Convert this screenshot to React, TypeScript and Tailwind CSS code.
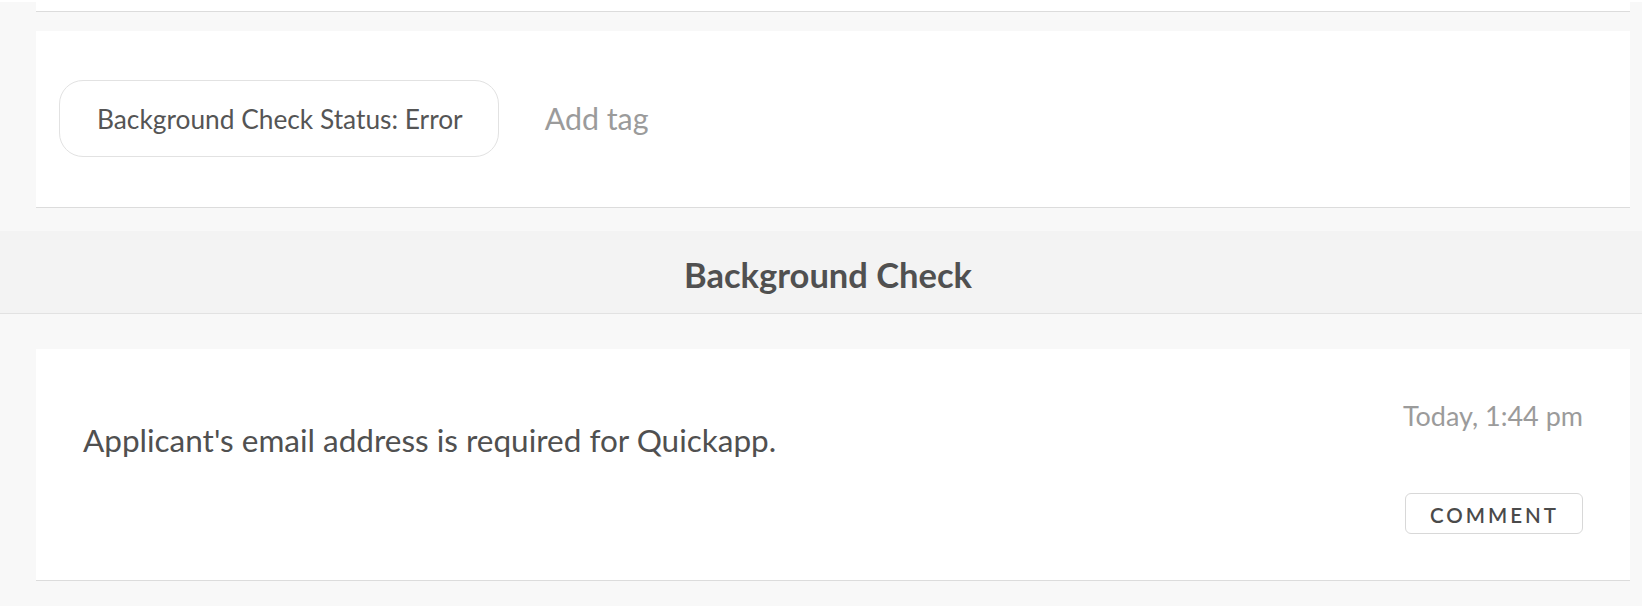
import React from "react";

const font = { fontFamily: '"Lato", "Noto Sans", sans-serif' };

export default function App() {
  return (
    <div className="w-[1642px] h-[606px] bg-[#f8f8f8] overflow-hidden" style={font}>
      <div className="h-[2px] bg-white" />
      <div className="ml-[36px] mr-[12px] h-[10px] bg-white border-b border-[#dcdcdc]" />
      <div className="ml-[36px] mr-[12px] mt-[19px] bg-white border-b border-[#dcdcdc] pt-[49px] pb-[50px] pl-[23px] flex items-start">
        <div className="h-[77px] rounded-[24px] border border-[#e2e2e2] bg-white pl-[37px] pr-[35px] pt-[3px] flex items-center text-[26.3px] leading-[1.2] text-[#555555]">
          Background Check Status: Error
        </div>
        <div className="ml-[46px] mt-[20px] text-[30.4px] leading-[1.2] text-[#9b9b9b]">Add tag</div>
      </div>
      <div className="mt-[23px] h-[83px] bg-[#f3f3f3] border-b border-[#e2e2e2] pt-[23px] pl-[14px] text-center text-[34.5px] font-bold leading-[1.2] text-[#505050]">
        Background Check
      </div>
      <div className="mt-[35px] ml-[36px] mr-[12px] bg-white border-b border-[#dcdcdc] pl-[47px] pr-[47px] flex justify-between">
        <div className="pt-[73px] text-[31.5px] leading-[1.2] text-[#505050]">
          Applicant's email address is required for Quickapp.
        </div>
        <div className="pt-[51px] pb-[46px] flex flex-col items-end">
          <div className="text-[27px] leading-[31px] text-[#9b9b9b]">Today, 1:44 pm</div>
          <button className="mt-[62px] h-[41px] border border-[#d8d8d8] rounded-[6px] bg-white pl-[24px] pr-[23px] pt-[2px] text-[20.5px] leading-[24px] font-semibold tracking-[3px] text-[#4a4a4a]">
            COMMENT
          </button>
        </div>
      </div>
    </div>
  );
}
